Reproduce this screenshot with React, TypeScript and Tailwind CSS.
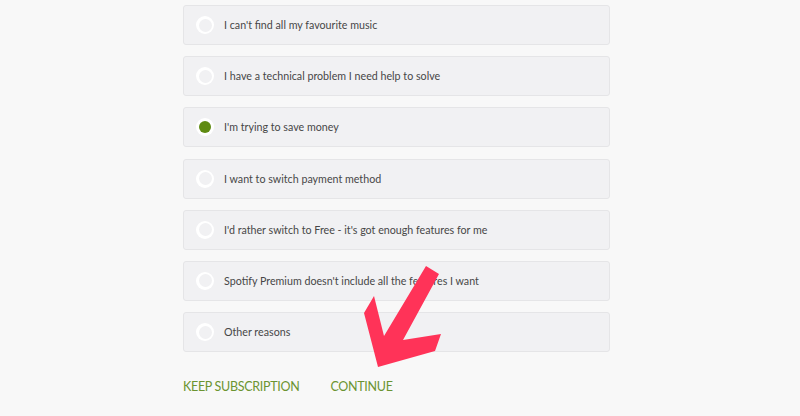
import { useState } from "react";

const reasons = [
  "I can't find all my favourite music",
  "I have a technical problem I need help to solve",
  "I'm trying to save money",
  "I want to switch payment method",
  "I'd rather switch to Free - it's got enough features for me",
  "Spotify Premium doesn't include all the features I want",
  "Other reasons",
];

const Arrow = () => (
  <svg
    className="absolute left-0 top-0 pointer-events-none"
    width="800"
    height="416"
    viewBox="0 0 800 416"
  >
    <polygon
      points="426,266 439,274 403,340 441,334 435,351 378,367 364,313 374,296 384,336"
      fill="#ff3358"
    />
  </svg>
);

const App = () => {
  const [selected, setSelected] = useState(2);

  return (
    <div
      className="relative w-[800px] h-[416px] bg-[#f8f8f8] overflow-hidden"
      style={{ fontFamily: "Lato, 'Liberation Sans', sans-serif" }}
    >
      <div className="ml-[183px] w-[427px] pt-[5px] flex flex-col gap-[11.2px]">
        {reasons.map((reason, i) => (
          <label
            key={reason}
            onClick={() => setSelected(i)}
            className="flex items-center h-[40px] rounded-[3px] border border-[#e5e5e7] bg-[#f1f1f3] pl-[12px] cursor-pointer"
          >
            <span className="flex items-center justify-center w-[18px] h-[18px] rounded-full bg-white">
              <span
                className={
                  selected === i
                    ? "w-[12px] h-[12px] rounded-full bg-[#5f8b12]"
                    : "w-[13px] h-[13px] rounded-full bg-[#f1f1f3]"
                }
              />
            </span>
            <span className="ml-[10px] text-[10.7px] text-[#474747]">
              {reason}
            </span>
          </label>
        ))}
      </div>

      {/* Actions */}
      <div className="ml-[183px] mt-[26px] flex items-center gap-[31px] text-[12.5px] text-[#6b9431] tracking-[-0.3px]">
        <button>KEEP SUBSCRIPTION</button>
        <button>CONTINUE</button>
      </div>

      <Arrow />
    </div>
  );
};

export default App;
